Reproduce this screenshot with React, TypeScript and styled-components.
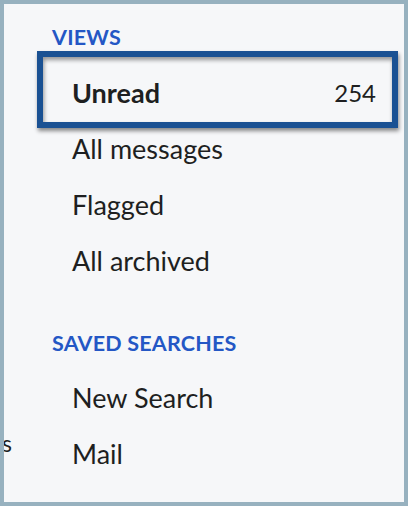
import React from 'react'
import styled, { createGlobalStyle } from 'styled-components'

const GlobalStyle = createGlobalStyle`
  html, body {
    margin: 0;
    padding: 0;
    background: #f6f7f9;
  }
  * {
    box-sizing: border-box;
  }
`

type Item = { label: string; count?: number; selected?: boolean }

const views: Item[] = [
  { label: 'Unread', count: 254, selected: true },
  { label: 'All messages' },
  { label: 'Flagged' },
  { label: 'All archived' },
]

const searches: Item[] = [{ label: 'New Search' }, { label: 'Mail' }]

const App = () => {
  return (
    <>
      <GlobalStyle />
      <Frame>
        <Overflow>s</Overflow>
        <Section $top={21}>
          <Heading>VIEWS</Heading>
          <List $gap={16}>
            {views.map((v) => (
              <Row key={v.label} $selected={v.selected}>
                <Label $selected={v.selected}>{v.label}</Label>
                {v.count !== undefined ? <Count>{v.count}</Count> : null}
              </Row>
            ))}
          </List>
        </Section>
        <Section $top={42}>
          <Heading>SAVED SEARCHES</Heading>
          <List $gap={15}>
            {searches.map((s) => (
              <Row key={s.label}>
                <Label>{s.label}</Label>
              </Row>
            ))}
          </List>
        </Section>
      </Frame>
    </>
  )
}

export default App

const Frame = styled.div`
  position: relative;
  width: 408px;
  height: 506px;
  border: 4px solid #97b1bf;
  background-color: #f6f7f9;
  overflow: hidden;
  font-family: Lato, 'Noto Sans', sans-serif;
  color: #1e1f21;
`

const Overflow = styled.span`
  position: absolute;
  left: -2px;
  top: 421px;
  font-size: 23px;
  line-height: 36px;
  color: #1e1f21;
`

const Section = styled.section<{ $top: number }>`
  display: flex;
  flex-direction: column;
  padding-top: ${(p) => p.$top}px;
`

const Heading = styled.h3`
  margin: 0 0 0 48px;
  font-size: 21.5px;
  line-height: 24px;
  font-weight: 700;
  color: #2457c5;
  letter-spacing: 0.2px;
`

const List = styled.ul<{ $gap: number }>`
  list-style: none;
  margin: ${(p) => p.$gap}px 0 0 0;
  padding: 0;
  display: flex;
  flex-direction: column;
`

const Row = styled.li<{ $selected?: boolean }>`
  position: relative;
  height: 56px;
  margin: 0 6px 0 33px;
  padding: 0 22px 0 35px;
  display: flex;
  align-items: center;
  justify-content: space-between;
  font-size: 27px;
  line-height: 56px;

  &::after {
    content: '';
    display: ${(p) => (p.$selected ? 'block' : 'none')};
    position: absolute;
    left: 0;
    right: 0;
    top: -14px;
    bottom: -7px;
    border: 6px solid #1a5193;
    box-shadow: 1px 3px 4px rgba(0, 0, 0, 0.45), inset 1px 3px 4px rgba(0, 0, 0, 0.4);
    pointer-events: none;
  }
`

const Label = styled.span<{ $selected?: boolean }>`
  font-weight: ${(p) => (p.$selected ? 700 : 400)};
`

const Count = styled.span`
  font-size: 24px;
`
